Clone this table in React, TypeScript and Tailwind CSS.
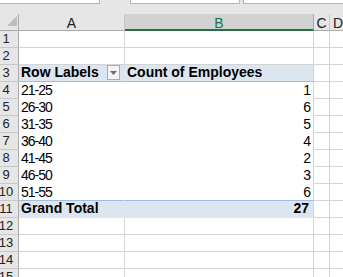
import React from 'react';

type Kind = 'plain' | 'head' | 'body' | 'last' | 'total';

interface Row {
  n: number;
  kind: Kind;
  label?: string;
  value?: string;
}

const rows: Row[] = [
  { n: 1, kind: 'plain' },
  { n: 2, kind: 'plain' },
  { n: 3, kind: 'head' },
  { n: 4, kind: 'body', label: '21-25', value: '1' },
  { n: 5, kind: 'body', label: '26-30', value: '6' },
  { n: 6, kind: 'body', label: '31-35', value: '5' },
  { n: 7, kind: 'body', label: '36-40', value: '4' },
  { n: 8, kind: 'body', label: '41-45', value: '2' },
  { n: 9, kind: 'body', label: '46-50', value: '3' },
  { n: 10, kind: 'last', label: '51-55', value: '6' },
  { n: 11, kind: 'total' },
  { n: 12, kind: 'plain' },
  { n: 13, kind: 'plain' },
  { n: 14, kind: 'plain' },
  { n: 15, kind: 'plain' },
];

function FilterButton() {
  return (
    <div className="mr-[4px] flex h-[15px] w-[13px] shrink-0 items-center justify-center border border-[#ababab] bg-[#f4f4f4]">
      <svg width="7" height="4" viewBox="0 0 7 4">
        <path d="M0 0H7L3.5 4Z" fill="#6a6a6a" />
      </svg>
    </div>
  );
}

function ColumnA({ row }: { row: Row }) {
  const base = 'flex h-full w-[106px] shrink-0 items-start border-r border-b pl-[2px]';
  switch (row.kind) {
    case 'head':
      return (
        <div className={`${base} justify-between border-r-transparent border-b-[#9fbde0] bg-[#dce6f1]`}>
          <span className="text-[14px] font-bold leading-[15px]">Row Labels</span>
          <FilterButton />
        </div>
      );
    case 'body':
      return (
        <div className={`${base} border-transparent`}>
          <span className="text-[14px] leading-[16px] tracking-[-1px]">{row.label}</span>
        </div>
      );
    case 'last':
      return (
        <div className={`${base} border-r-transparent border-b-[#9fbde0]`}>
          <span className="text-[14px] leading-[16px] tracking-[-1px]">{row.label}</span>
        </div>
      );
    case 'total':
      return (
        <div className={`${base} border-transparent bg-[#dce6f1]`}>
          <span className="text-[14px] font-bold leading-[15px]">Grand Total</span>
        </div>
      );
    default:
      return <div className={`${base} border-[#d4d4d4]`} />;
  }
}

function ColumnB({ row }: { row: Row }) {
  const base = 'flex h-full w-[189px] shrink-0 items-start border-r border-r-[#d4d4d4] border-b';
  switch (row.kind) {
    case 'head':
      return (
        <div className={`${base} border-b-[#9fbde0] bg-[#dce6f1] pl-[2px]`}>
          <span className="text-[14px] font-bold leading-[15px]">Count of Employees</span>
        </div>
      );
    case 'body':
      return (
        <div className={`${base} justify-end border-b-transparent pr-[3px]`}>
          <span className="text-[14px] leading-[16px] tracking-[-1px]">{row.value}</span>
        </div>
      );
    case 'last':
      return (
        <div className={`${base} justify-end border-b-[#9fbde0] pr-[3px]`}>
          <span className="text-[14px] leading-[16px] tracking-[-1px]">{row.value}</span>
        </div>
      );
    case 'total':
      return (
        <div className={`${base} justify-end border-b-transparent bg-[#dce6f1] pr-[4px]`}>
          <span className="text-[14px] font-bold leading-[15px]">27</span>
        </div>
      );
    default:
      return <div className={`${base} border-b-[#d4d4d4]`} />;
  }
}

function SheetRow({ row }: { row: Row }) {
  return (
    <div className="flex h-[17px]">
      <div className="flex h-full w-[19px] shrink-0 border-r border-b border-r-[#ababab] border-b-[#c8c8c8] bg-[#e6e6e6]">
        <div className="flex w-[12px] justify-center text-[13px] leading-[16px] text-[#222]">{row.n}</div>
      </div>
      <ColumnA row={row} />
      <ColumnB row={row} />
      <div className="h-full w-[16px] shrink-0 border-r border-b border-[#d4d4d4]" />
      <div className="h-full flex-1 border-b border-[#d4d4d4]" />
    </div>
  );
}

function ColumnHeaders() {
  return (
    <div className="flex h-[17px] text-[14px] leading-[14px] text-[#222]">
      <div className="relative h-full w-[19px] shrink-0 border-r border-b border-[#ababab] bg-[#e6e6e6]">
        <svg className="absolute left-[7px] top-[2px]" width="10" height="10" viewBox="0 0 10 10">
          <path d="M10 0V10H0Z" fill="#bcbcbc" />
        </svg>
      </div>
      <div className="flex h-full w-[106px] shrink-0 justify-center border-r border-b border-r-[#c6c6c6] border-b-[#ababab] bg-[#e6e6e6] pt-[2px]">
        A
      </div>
      <div className="flex h-full w-[189px] shrink-0 justify-center border-r border-b-2 border-r-[#ababab] border-b-[#217346] bg-[#d2d2d2] pt-[2px] text-[#217346]">
        B
      </div>
      <div className="flex h-full w-[16px] shrink-0 justify-center border-r border-b border-r-[#c6c6c6] border-b-[#ababab] bg-[#e6e6e6] pt-[2px]">
        C
      </div>
      <div className="flex h-full flex-1 justify-start border-b border-[#ababab] bg-[#e6e6e6] pl-[3px] pt-[2px]">
        D
      </div>
    </div>
  );
}

export default function App() {
  return (
    <div className="h-[277px] w-[343px] overflow-hidden bg-white font-['Liberation_Sans',Arial,sans-serif] text-black">
      <div className="h-[14px] bg-[#e6e6e6]">
        <div className="flex h-[4px]">
          <div className="h-full w-[100px] shrink-0 border-r border-b border-[#b4b4b4] bg-white" />
          <div className="w-[30px] shrink-0" />
          <div className="h-full w-[110px] shrink-0 border-x border-b border-[#b4b4b4] bg-white" />
          <div className="w-[3px] shrink-0" />
          <div className="h-full flex-1 border-l border-b border-[#b4b4b4] bg-white" />
        </div>
      </div>
      <ColumnHeaders />
      {rows.map((r) => (
        <SheetRow key={r.n} row={r} />
      ))}
    </div>
  );
}
